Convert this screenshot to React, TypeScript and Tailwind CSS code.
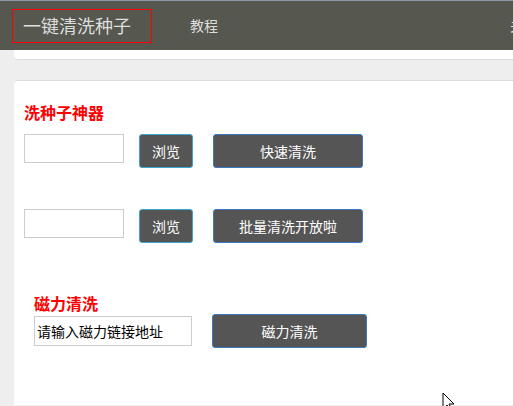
import React from 'react';

const font = { fontFamily: '"Microsoft YaHei", "Noto Sans CJK SC", "Liberation Sans", sans-serif' };

const Browse: React.FC = () => (
  <button className="w-[54px] h-[34px] rounded-[3px] border border-[#3aa8cc] bg-[#555555] text-white text-[14px]">
    浏览
  </button>
);

const Action: React.FC<{ label: string; w: string }> = ({ label, w }) => (
  <button className={`${w} h-[34px] rounded-[3px] border border-[#3a7bc0] bg-[#555555] text-white text-[14px]`}>
    {label}
  </button>
);

const FileRow: React.FC<{ label: string }> = ({ label }) => (
  <div className="flex items-start">
    <div className="w-[100px] h-[29px] border border-[#cccccc] bg-white" />
    <div className="ml-[15px]">
      <Browse />
    </div>
    <div className="ml-[20px]">
      <Action label={label} w="w-[150px]" />
    </div>
  </div>
);

const App: React.FC = () => {
  return (
    <div className="relative w-[513px] h-[406px] overflow-hidden bg-[#eeeeee]" style={font}>
      <header className="h-[50px] bg-[#56574f] border-t border-[#8a97a6] flex items-center whitespace-nowrap">
        <div className="shrink-0 ml-[12px] w-[140px] h-[34px] border border-[#ff0000] flex items-center pl-[10px] text-[18px] text-[#dddddd]">
          一键清洗种子
        </div>
        <span className="shrink-0 ml-[38px] text-[14px] text-[#dddddd]">教程</span>
        <span className="shrink-0 ml-[292px] text-[14px] text-[#dddddd]">关于</span>
      </header>

      <div className="pl-[14px]">
        <div className="h-[10px] bg-white rounded-bl-[4px] border-b border-[#dcdcdc]" />
        <div className="mt-[20px] h-[325px] bg-white rounded-tl-[4px] border-t border-[#dcdcdc] pl-[10px] pt-[20px]">
          <h2 className="text-[16px] leading-[22px] font-bold text-[#ff0000]">洗种子神器</h2>
          <div className="mt-[11px]">
            <FileRow label="快速清洗" />
          </div>
          <div className="mt-[41px]">
            <FileRow label="批量清洗开放啦" />
          </div>

          <div className="mt-[49px] ml-[10px]">
            <h2 className="text-[16px] leading-[22px] font-bold text-[#ff0000]">磁力清洗</h2>
            <div className="flex items-center">
              <input
                className="w-[158px] h-[30px] border border-[#cccccc] px-[2px] text-[14px] text-black placeholder:text-black outline-none"
                placeholder="请输入磁力链接地址"
              />
              <div className="ml-[20px]">
                <Action label="磁力清洗" w="w-[155px]" />
              </div>
            </div>
          </div>
        </div>
      </div>

      <svg className="absolute left-[442px] top-[392px]" width="14" height="20" viewBox="0 0 14 20">
        <path d="M1 1 L1 17 L5 13 L8 19 L10 18 L7 12 L12 12 Z" fill="white" stroke="black" strokeWidth="1" />
      </svg>
    </div>
  );
};

export default App;
